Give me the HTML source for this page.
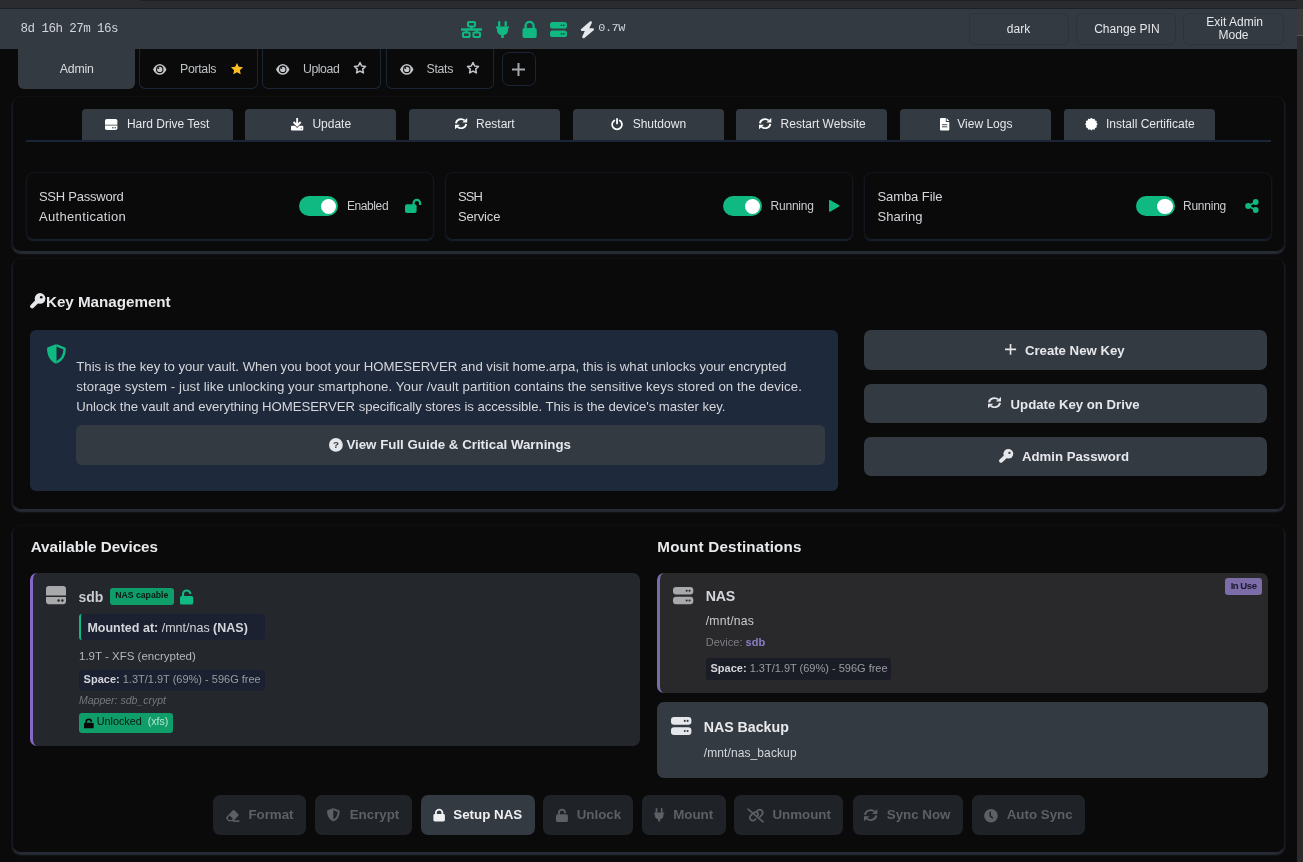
<!DOCTYPE html>
<html><head><meta charset="utf-8">
<style>
#wrap{position:absolute;left:0;top:0;width:1303px;height:862px;will-change:transform}
*{box-sizing:border-box;margin:0;padding:0}
html,body{width:1303px;height:862px;overflow:hidden;background:#0a0a0a;font-family:"Liberation Sans",sans-serif;color:#e5e7eb;position:relative}
.a{position:absolute;white-space:nowrap}
svg.a{overflow:visible}
</style></head><body><div id="wrap">
<div class="a" style="left:0px;top:0px;width:1297px;height:9px;background:#2a2c30;border-radius:0px;"></div>
<div class="a" style="left:140px;top:0px;width:1157px;height:1px;background:#1f2023;border-radius:0px;"></div>
<div class="a" style="left:0px;top:8px;width:1297px;height:1px;background:#1f2023;border-radius:0px;"></div>
<div class="a" style="left:1297px;top:0px;width:6px;height:862px;background:#2b2b2b;border-radius:0px;"></div>
<div class="a" style="left:1297px;top:9px;width:6px;height:26px;background:#3a3a3a;border-radius:0px;"></div>
<div class="a" style="left:1297px;top:35px;width:6px;height:1px;background:#555;border-radius:0px;"></div>
<div class="a" style="left:0px;top:9px;width:1297px;height:40px;background:#343a42;border-radius:0px;"></div>
<div class="a" style="left:20.60px;top:22.82px;font-size:12.5px;line-height:12.5px;color:#d1d5db;font-weight:normal;font-style:normal;font-family:'Liberation Mono',monospace;letter-spacing:-0.544px;">8d 16h 27m 16s</div>
<svg class="a" style="left:461px;top:21px;" width="21" height="17" viewBox="0 0 21 17" preserveAspectRatio="none"><g fill="none" stroke="#10b981" stroke-width="2"><rect x="7" y="1" width="7" height="4.4" rx="0.8"/><rect x="2" y="11.6" width="6.6" height="4.4" rx="0.8"/><rect x="12.4" y="11.6" width="6.6" height="4.4" rx="0.8"/></g><rect x="0" y="7.3" width="21" height="2.4" fill="#10b981"/><rect x="9.5" y="5" width="2" height="3" fill="#10b981"/><rect x="4.3" y="9" width="2" height="2.6" fill="#10b981"/><rect x="14.7" y="9" width="2" height="2.6" fill="#10b981"/></svg>
<svg class="a" style="left:496px;top:21px;" width="13" height="17" viewBox="0 0 13 17" preserveAspectRatio="none"><rect x="2.1" y="0" width="2.2" height="6" rx="1" fill="#10b981"/><rect x="8.6" y="0" width="2.2" height="6" rx="1" fill="#10b981"/><path fill="#10b981" d="M0 5.6h13v1.6h-1V9a5.5 5.5 0 0 1-4.2 5.2V17H5.2v-2.8A5.5 5.5 0 0 1 1 9V7.2H0z"/></svg>
<svg class="a" style="left:522px;top:21px;" width="15.2" height="17" viewBox="0 0 16 18" preserveAspectRatio="none"><path fill="none" stroke="#10b981" stroke-width="2.4" d="M3.8 8V5.2a4.2 4.2 0 0 1 8.4 0V8"/><rect x="0.5" y="7.3" width="15" height="10.7" rx="2" fill="#10b981"/></svg>
<svg class="a" style="left:550px;top:22px;" width="17" height="15.3" viewBox="0 0 20 18" preserveAspectRatio="none"><rect x="0" y="0" width="20" height="7.6" rx="3" fill="#10b981"/><rect x="0" y="10" width="20" height="7.6" rx="3" fill="#10b981"/><circle cx="13.5" cy="3.8" r="1" fill="#343a42"/><circle cx="16.3" cy="3.8" r="1" fill="#343a42"/><circle cx="13.5" cy="13.8" r="1" fill="#343a42"/><circle cx="16.3" cy="13.8" r="1" fill="#343a42"/></svg>
<svg class="a" style="left:581px;top:21px;" width="13" height="17.3" viewBox="0 0 13 17.3" preserveAspectRatio="none"><path fill="#e5e7eb" d="M10.2 0.3c.6.3.9 1 .6 1.6L8.3 7.2h3.5c.6 0 1.1.3 1.2.9.1.4 0 .8-.3 1.1L3.4 16.9c-.5.5-1.2.5-1.7.1-.5-.3-.6-1-.4-1.5l2.5-5.4H.9c-.5 0-1-.3-1.1-.8-.1-.5 0-.9.4-1.2L8.9.6c.4-.4.9-.5 1.3-.3z"/></svg>
<div class="a" style="left:598.20px;top:23.26px;font-size:11.8px;line-height:11.8px;color:#d1d5db;font-weight:normal;font-style:normal;font-family:'Liberation Mono',monospace;letter-spacing:-0.381px;">0.7W</div>
<div class="a" style="left:969px;top:12.5px;width:100px;height:32.5px;background:#343a42;border-radius:6px;border:1px solid #2f343c"></div>
<div class="a" style="left:1075.5px;top:12.5px;width:100px;height:32.5px;background:#343a42;border-radius:6px;border:1px solid #2f343c"></div>
<div class="a" style="left:1183px;top:12.5px;width:101px;height:32.5px;background:#343a42;border-radius:6px;border:1px solid #2f343c"></div>
<div class="a" style="left:1006.80px;top:22.84px;font-size:12px;line-height:12px;color:#e5e7eb;font-weight:normal;font-style:normal;font-family:'Liberation Sans',sans-serif;">dark</div>
<div class="a" style="left:1094.20px;top:22.84px;font-size:12px;line-height:12px;color:#e5e7eb;font-weight:normal;font-style:normal;font-family:'Liberation Sans',sans-serif;">Change PIN</div>
<div class="a" style="left:1206.30px;top:16.04px;font-size:12px;line-height:12px;color:#e5e7eb;font-weight:normal;font-style:normal;font-family:'Liberation Sans',sans-serif;">Exit Admin</div>
<div class="a" style="left:1218.50px;top:28.84px;font-size:12px;line-height:12px;color:#e5e7eb;font-weight:normal;font-style:normal;font-family:'Liberation Sans',sans-serif;">Mode</div>
<div class="a" style="left:18px;top:49px;width:117px;height:40px;background:#343a42;border-radius:0px;border-radius:0 0 6px 6px"></div>
<div class="a" style="left:59.80px;top:62.89px;font-size:12.3px;line-height:12.3px;color:#d9dbde;font-weight:normal;font-style:normal;font-family:'Liberation Sans',sans-serif;letter-spacing:-0.213px;">Admin</div>
<div class="a" style="left:138.5px;top:49px;width:119.5px;height:40px;border:1px solid #1b2536;border-top:none;border-radius:0 0 6px 6px"></div>
<div class="a" style="left:261.5px;top:49px;width:119.5px;height:40px;border:1px solid #1b2536;border-top:none;border-radius:0 0 6px 6px"></div>
<div class="a" style="left:385.5px;top:49px;width:108.5px;height:40px;border:1px solid #1b2536;border-top:none;border-radius:0 0 6px 6px"></div>
<svg class="a" style="left:153px;top:63.5px;" width="13.5" height="10.8" viewBox="0 0 14 11" preserveAspectRatio="none"><path fill="#c4c6ca" d="M0 5.5C1.6 2.2 4.2 0 7 0s5.4 2.2 7 5.5C12.4 8.8 9.8 11 7 11S1.6 8.8 0 5.5z"/><circle cx="7" cy="5.5" r="3.3" fill="none" stroke="#0a0a0a" stroke-width="1.1"/><circle cx="5.6" cy="4.2" r="1" fill="#0a0a0a"/></svg>
<div class="a" style="left:180.00px;top:63.09px;font-size:12.3px;line-height:12.3px;color:#bec1c5;font-weight:normal;font-style:normal;font-family:'Liberation Sans',sans-serif;letter-spacing:-0.298px;">Portals</div>
<svg class="a" style="left:229.89999999999998px;top:61.6px;" width="14" height="14" viewBox="0 0 24 24" preserveAspectRatio="none"><path fill="#fbbf24" d="M12 1.5l3.1 6.6 7.2.9-5.3 5 1.4 7.1L12 17.6l-6.4 3.5 1.4-7.1-5.3-5 7.2-.9z"/></svg>
<svg class="a" style="left:276.3px;top:63.5px;" width="13.5" height="10.8" viewBox="0 0 14 11" preserveAspectRatio="none"><path fill="#c4c6ca" d="M0 5.5C1.6 2.2 4.2 0 7 0s5.4 2.2 7 5.5C12.4 8.8 9.8 11 7 11S1.6 8.8 0 5.5z"/><circle cx="7" cy="5.5" r="3.3" fill="none" stroke="#0a0a0a" stroke-width="1.1"/><circle cx="5.6" cy="4.2" r="1" fill="#0a0a0a"/></svg>
<div class="a" style="left:303.00px;top:63.09px;font-size:12.3px;line-height:12.3px;color:#bec1c5;font-weight:normal;font-style:normal;font-family:'Liberation Sans',sans-serif;letter-spacing:-0.447px;">Upload</div>
<svg class="a" style="left:353.2px;top:61px;" width="14" height="14" viewBox="0 0 24 24" preserveAspectRatio="none"><path fill="none" stroke="#c4c6ca" stroke-width="2.6" stroke-linejoin="round" d="M12 2.5l2.9 6 6.5.9-4.8 4.6 1.2 6.5L12 17.3l-5.8 3.2 1.2-6.5-4.8-4.6 6.5-.9z"/></svg>
<svg class="a" style="left:400px;top:63.5px;" width="13.5" height="10.8" viewBox="0 0 14 11" preserveAspectRatio="none"><path fill="#c4c6ca" d="M0 5.5C1.6 2.2 4.2 0 7 0s5.4 2.2 7 5.5C12.4 8.8 9.8 11 7 11S1.6 8.8 0 5.5z"/><circle cx="7" cy="5.5" r="3.3" fill="none" stroke="#0a0a0a" stroke-width="1.1"/><circle cx="5.6" cy="4.2" r="1" fill="#0a0a0a"/></svg>
<div class="a" style="left:426.50px;top:63.09px;font-size:12.3px;line-height:12.3px;color:#bec1c5;font-weight:normal;font-style:normal;font-family:'Liberation Sans',sans-serif;letter-spacing:-0.306px;">Stats</div>
<svg class="a" style="left:465.7px;top:61px;" width="14" height="14" viewBox="0 0 24 24" preserveAspectRatio="none"><path fill="none" stroke="#c4c6ca" stroke-width="2.6" stroke-linejoin="round" d="M12 2.5l2.9 6 6.5.9-4.8 4.6 1.2 6.5L12 17.3l-5.8 3.2 1.2-6.5-4.8-4.6 6.5-.9z"/></svg>
<div class="a" style="left:502px;top:52px;width:34px;height:34px;border:1px solid #1b2536;border-radius:7px"></div>
<svg class="a" style="left:512.2px;top:63.3px;" width="13" height="13" viewBox="0 0 13 13" preserveAspectRatio="none"><path stroke="#a3a6ab" stroke-width="2" d="M6.5 0v13M0 6.5h13"/></svg>
<div class="a" style="left:12px;top:96px;width:1273px;height:156px;border:1px solid #161b23;border-top-color:#0d0f13;border-bottom-color:#252b35;border-radius:9px;box-shadow:0 1.5px 2px 0 #2a303a"></div>
<div class="a" style="left:26px;top:140px;width:1245px;height:1.5px;background:#1c2535;border-radius:0px;"></div>
<div class="a" style="left:82px;top:109.4px;width:151.3px;height:30.6px;background:#343a42;border-radius:0px;border-radius:4px 4px 0 0"></div>
<div class="a" style="left:245.2px;top:109.4px;width:151.3px;height:30.6px;background:#343a42;border-radius:0px;border-radius:4px 4px 0 0"></div>
<div class="a" style="left:408.8px;top:109.4px;width:151.3px;height:30.6px;background:#343a42;border-radius:0px;border-radius:4px 4px 0 0"></div>
<div class="a" style="left:572.5px;top:109.4px;width:151.3px;height:30.6px;background:#343a42;border-radius:0px;border-radius:4px 4px 0 0"></div>
<div class="a" style="left:736.2px;top:109.4px;width:151.3px;height:30.6px;background:#343a42;border-radius:0px;border-radius:4px 4px 0 0"></div>
<div class="a" style="left:899.9px;top:109.4px;width:151.3px;height:30.6px;background:#343a42;border-radius:0px;border-radius:4px 4px 0 0"></div>
<div class="a" style="left:1063.6px;top:109.4px;width:151.3px;height:30.6px;background:#343a42;border-radius:0px;border-radius:4px 4px 0 0"></div>
<svg class="a" style="left:104.9px;top:118.7px;" width="12.4" height="11" viewBox="0 0 20 18" preserveAspectRatio="none"><path fill="#ffffff" d="M0 3a3 3 0 0 1 3-3h14a3 3 0 0 1 3 3v6.3H0z"/><path fill="#ffffff" d="M0 10.8h20v4.4a2.8 2.8 0 0 1-2.8 2.8H2.8A2.8 2.8 0 0 1 0 15.2z"/><circle cx="12.6" cy="14.4" r="1.2" fill="#343a42"/><circle cx="16.4" cy="14.4" r="1.2" fill="#343a42"/></svg>
<div class="a" style="left:126.90px;top:117.94px;font-size:12px;line-height:12px;color:#e5e7eb;font-weight:normal;font-style:normal;font-family:'Liberation Sans',sans-serif;">Hard Drive Test</div>
<svg class="a" style="left:290.9px;top:118px;" width="12.3" height="12.4" viewBox="0 0 13 13" preserveAspectRatio="none"><path fill="#ffffff" d="M5.5 0h2v5.6l2.1-2.1 1.4 1.4-4.5 4.5-4.5-4.5 1.4-1.4 2.1 2.1z"/><path fill="#ffffff" d="M0 9.2a1 1 0 0 1 1-1h3.2l2.3 2.2 2.3-2.2H12a1 1 0 0 1 1 1V12a1 1 0 0 1-1 1H1a1 1 0 0 1-1-1z"/><circle cx="10.8" cy="10.8" r="0.6" fill="#343a42"/></svg>
<div class="a" style="left:312.40px;top:117.94px;font-size:12px;line-height:12px;color:#e5e7eb;font-weight:normal;font-style:normal;font-family:'Liberation Sans',sans-serif;">Update</div>
<svg class="a" style="left:455px;top:118.4px;" width="12.2" height="11.3" viewBox="0 0 16 16" preserveAspectRatio="none"><g fill="none" stroke="#ffffff" stroke-width="2.4"><path d="M1.3 7.6A6.7 6.7 0 0 1 12.6 3.4"/><path d="M14.7 8.4A6.7 6.7 0 0 1 3.4 12.6"/></g><path fill="#ffffff" d="M16 0v6.4H9.6z"/><path fill="#ffffff" d="M0 16V9.6h6.4z"/></svg>
<div class="a" style="left:476.00px;top:117.94px;font-size:12px;line-height:12px;color:#e5e7eb;font-weight:normal;font-style:normal;font-family:'Liberation Sans',sans-serif;">Restart</div>
<svg class="a" style="left:611.2px;top:118.2px;" width="12.1" height="11.8" viewBox="0 0 12 12" preserveAspectRatio="none"><path fill="none" stroke="#ffffff" stroke-width="1.7" stroke-linecap="round" d="M3.3 2.5A4.9 4.9 0 1 0 8.7 2.5"/><path stroke="#ffffff" stroke-width="1.8" stroke-linecap="round" d="M6 0.9v4.6"/></svg>
<div class="a" style="left:632.70px;top:117.94px;font-size:12px;line-height:12px;color:#e5e7eb;font-weight:normal;font-style:normal;font-family:'Liberation Sans',sans-serif;">Shutdown</div>
<svg class="a" style="left:759px;top:118.4px;" width="12.3" height="11.3" viewBox="0 0 16 16" preserveAspectRatio="none"><g fill="none" stroke="#ffffff" stroke-width="2.4"><path d="M1.3 7.6A6.7 6.7 0 0 1 12.6 3.4"/><path d="M14.7 8.4A6.7 6.7 0 0 1 3.4 12.6"/></g><path fill="#ffffff" d="M16 0v6.4H9.6z"/><path fill="#ffffff" d="M0 16V9.6h6.4z"/></svg>
<div class="a" style="left:780.60px;top:117.94px;font-size:12px;line-height:12px;color:#e5e7eb;font-weight:normal;font-style:normal;font-family:'Liberation Sans',sans-serif;">Restart Website</div>
<svg class="a" style="left:940px;top:117.9px;" width="9.3" height="12.4" viewBox="0 0 9.3 12.4" preserveAspectRatio="none"><path fill="#ffffff" d="M1 0h4.8v3.2a.9.9 0 0 0 .9.9h2.6V11.4a1 1 0 0 1-1 1H1a1 1 0 0 1-1-1V1a1 1 0 0 1 1-1z"/><path fill="#ffffff" d="M6.6 0l2.7 2.9H6.6z"/><rect x="2" y="6.3" width="5.3" height="0.9" fill="#343a42"/><rect x="2" y="8.4" width="5.3" height="0.9" fill="#343a42"/></svg>
<div class="a" style="left:957.30px;top:117.94px;font-size:12px;line-height:12px;color:#e5e7eb;font-weight:normal;font-style:normal;font-family:'Liberation Sans',sans-serif;">View Logs</div>
<svg class="a" style="left:1085px;top:118px;" width="12.7" height="12.3" viewBox="0 0 12.7 12.3" preserveAspectRatio="none"><polygon fill="#ffffff" points="12.70,6.15 11.47,7.52 11.85,9.32 10.10,9.90 9.53,11.65 7.72,11.27 6.35,12.50 4.98,11.27 3.18,11.65 2.60,9.90 0.85,9.32 1.23,7.52 0.00,6.15 1.23,4.78 0.85,2.98 2.60,2.40 3.17,0.65 4.98,1.03 6.35,-0.20 7.72,1.03 9.53,0.65 10.10,2.40 11.85,2.97 11.47,4.78"/></svg>
<div class="a" style="left:1106.00px;top:117.94px;font-size:12px;line-height:12px;color:#e5e7eb;font-weight:normal;font-style:normal;font-family:'Liberation Sans',sans-serif;">Install Certificate</div>
<div class="a" style="left:25.5px;top:172px;width:408px;height:67.5px;border:1px solid #12161d;border-bottom-color:#18202c;border-radius:8px;box-shadow:0 1.5px 1.5px -0.5px #1a2332"></div>
<div class="a" style="left:444.5px;top:172px;width:408px;height:67.5px;border:1px solid #12161d;border-bottom-color:#18202c;border-radius:8px;box-shadow:0 1.5px 1.5px -0.5px #1a2332"></div>
<div class="a" style="left:863.5px;top:172px;width:408px;height:67.5px;border:1px solid #12161d;border-bottom-color:#18202c;border-radius:8px;box-shadow:0 1.5px 1.5px -0.5px #1a2332"></div>
<div class="a" style="left:38.90px;top:190.20px;font-size:13px;line-height:13px;color:#d4d6da;font-weight:normal;font-style:normal;font-family:'Liberation Sans',sans-serif;letter-spacing:-0.235px;">SSH Password</div>
<div class="a" style="left:38.90px;top:209.90px;font-size:13px;line-height:13px;color:#d4d6da;font-weight:normal;font-style:normal;font-family:'Liberation Sans',sans-serif;letter-spacing:0.350px;">Authentication</div>
<div class="a" style="left:299.2px;top:196.2px;width:39px;height:20px;background:#10b981;border-radius:10px;"></div>
<div class="a" style="left:320.7px;top:198.5px;width:15.5px;height:15.5px;background:#ffffff;border-radius:8px;"></div>
<div class="a" style="left:346.90px;top:200.44px;font-size:12px;line-height:12px;color:#c9cbcf;font-weight:normal;font-style:normal;font-family:'Liberation Sans',sans-serif;letter-spacing:-0.392px;">Enabled</div>
<svg class="a" style="left:405px;top:199px;" width="15.5" height="14" viewBox="0 0 16 14" preserveAspectRatio="none"><path fill="none" stroke="#10b981" stroke-width="2.2" d="M8.8 6V4.2a3.4 3.4 0 0 1 6.8 0V6"/><rect x="0" y="5.3" width="12" height="8.7" rx="2" fill="#10b981"/></svg>
<div class="a" style="left:458.00px;top:190.20px;font-size:13px;line-height:13px;color:#d4d6da;font-weight:normal;font-style:normal;font-family:'Liberation Sans',sans-serif;letter-spacing:-0.877px;">SSH</div>
<div class="a" style="left:458.00px;top:209.90px;font-size:13px;line-height:13px;color:#d4d6da;font-weight:normal;font-style:normal;font-family:'Liberation Sans',sans-serif;letter-spacing:-0.164px;">Service</div>
<div class="a" style="left:723px;top:196.2px;width:39px;height:20px;background:#10b981;border-radius:10px;"></div>
<div class="a" style="left:744.5px;top:198.5px;width:15.5px;height:15.5px;background:#ffffff;border-radius:8px;"></div>
<div class="a" style="left:770.60px;top:200.44px;font-size:12px;line-height:12px;color:#c9cbcf;font-weight:normal;font-style:normal;font-family:'Liberation Sans',sans-serif;letter-spacing:-0.243px;">Running</div>
<svg class="a" style="left:829px;top:200px;" width="10.7" height="11.8" viewBox="0 0 10.7 11.8" preserveAspectRatio="none"><path fill="#10b981" d="M0 .8C0 .2.6-.2 1.1.1l9.1 5.2c.5.3.5 1 0 1.3L1.1 11.7C.6 12 0 11.6 0 11z"/></svg>
<div class="a" style="left:877.50px;top:190.20px;font-size:13px;line-height:13px;color:#d4d6da;font-weight:normal;font-style:normal;font-family:'Liberation Sans',sans-serif;letter-spacing:-0.085px;">Samba File</div>
<div class="a" style="left:877.50px;top:209.90px;font-size:13px;line-height:13px;color:#d4d6da;font-weight:normal;font-style:normal;font-family:'Liberation Sans',sans-serif;letter-spacing:0.027px;">Sharing</div>
<div class="a" style="left:1135.5px;top:196.2px;width:39px;height:20px;background:#10b981;border-radius:10px;"></div>
<div class="a" style="left:1157.0px;top:198.5px;width:15.5px;height:15.5px;background:#ffffff;border-radius:8px;"></div>
<div class="a" style="left:1183.00px;top:200.44px;font-size:12px;line-height:12px;color:#c9cbcf;font-weight:normal;font-style:normal;font-family:'Liberation Sans',sans-serif;letter-spacing:-0.243px;">Running</div>
<svg class="a" style="left:1245px;top:199.4px;" width="14" height="14" viewBox="0 0 14 14" preserveAspectRatio="none"><path stroke="#10b981" stroke-width="1.6" d="M3.2 7L10.7 3M3.2 7l7.5 4"/><circle cx="3.2" cy="7" r="3" fill="#10b981"/><circle cx="10.7" cy="3" r="2.9" fill="#10b981"/><circle cx="10.7" cy="11" r="2.9" fill="#10b981"/></svg>
<div class="a" style="left:12px;top:258px;width:1273px;height:252px;border:1px solid #161b23;border-top-color:#0d0f13;border-bottom-color:#252b35;border-radius:9px;box-shadow:0 1.5px 2px 0 #2a303a"></div>
<svg class="a" style="left:30px;top:293.4px;" width="15.5" height="15.5" viewBox="0 0 16 16" preserveAspectRatio="none"><circle cx="10.4" cy="5.6" r="5.5" fill="#e5e7eb"/><circle cx="11.6" cy="4.5" r="1.3" fill="#0a0a0a"/><path d="M7.2 8.8L2.2 13.8" stroke="#e5e7eb" stroke-width="4.3" stroke-linecap="round"/></svg>
<div class="a" style="left:46.00px;top:294.03px;font-size:15.2px;line-height:15.2px;color:#e8e9eb;font-weight:bold;font-style:normal;font-family:'Liberation Sans',sans-serif;letter-spacing:-0.023px;">Key Management</div>
<div class="a" style="left:30px;top:330px;width:808px;height:161px;background:#1e293b;border-radius:6px;"></div>
<svg class="a" style="left:46.5px;top:344.1px;" width="19" height="20" viewBox="0 0 19 20" preserveAspectRatio="none"><path fill="#10b981" d="M9.5 0L1 3.3C.4 3.5 0 4.1 0 4.8 .2 11.4 3.1 17 8.6 19.6c.3.2.6.2.9.2V0z"/><path fill="none" stroke="#10b981" stroke-width="2.5" d="M9.5 1.4L17 4.4c.5.2.7.6.7 1C17.4 11.3 14.8 16.1 9.5 18.4"/></svg>
<div class="a" style="left:76.30px;top:360.13px;font-size:13.2px;line-height:13.2px;color:#d4d6da;font-weight:normal;font-style:normal;font-family:'Liberation Sans',sans-serif;letter-spacing:-0.025px;">This is the key to your vault. When you boot your HOMESERVER and visit home.arpa, this is what unlocks your encrypted</div>
<div class="a" style="left:76.30px;top:380.13px;font-size:13.2px;line-height:13.2px;color:#d4d6da;font-weight:normal;font-style:normal;font-family:'Liberation Sans',sans-serif;letter-spacing:0.099px;">storage system - just like unlocking your smartphone. Your /vault partition contains the sensitive keys stored on the device.</div>
<div class="a" style="left:76.30px;top:400.13px;font-size:13.2px;line-height:13.2px;color:#d4d6da;font-weight:normal;font-style:normal;font-family:'Liberation Sans',sans-serif;letter-spacing:-0.059px;">Unlock the vault and everything HOMESERVER specifically stores is accessible. This is the device's master key.</div>
<div class="a" style="left:76px;top:425.2px;width:749.3px;height:40px;background:#343a42;border-radius:6px;"></div>
<svg class="a" style="left:328.9px;top:438px;" width="13.8" height="13.8" viewBox="0 0 14 14" preserveAspectRatio="none"><circle cx="7" cy="7" r="7" fill="#e5e7eb"/><text x="7" y="10.6" text-anchor="middle" font-family="Liberation Sans" font-weight="bold" font-size="10" fill="#343a42">?</text></svg>
<div class="a" style="left:346.40px;top:438.04px;font-size:13.3px;line-height:13.3px;color:#e5e7eb;font-weight:bold;font-style:normal;font-family:'Liberation Sans',sans-serif;">View Full Guide &amp; Critical Warnings</div>
<div class="a" style="left:863.5px;top:330.4px;width:403.7px;height:39.7px;background:#343a42;border-radius:7px;"></div>
<div class="a" style="left:863.5px;top:383.6px;width:403.7px;height:39.7px;background:#343a42;border-radius:7px;"></div>
<div class="a" style="left:863.5px;top:436.5px;width:403.7px;height:39.7px;background:#343a42;border-radius:7px;"></div>
<svg class="a" style="left:1004.5px;top:344.4px;" width="11.1" height="10.8" viewBox="0 0 11 11" preserveAspectRatio="none"><path stroke="#e5e7eb" stroke-width="1.6" d="M5.5 0v11M0 5.5h11"/></svg>
<div class="a" style="left:1024.90px;top:344.23px;font-size:13.2px;line-height:13.2px;color:#e5e7eb;font-weight:bold;font-style:normal;font-family:'Liberation Sans',sans-serif;">Create New Key</div>
<svg class="a" style="left:988.2px;top:397.4px;" width="13" height="11.3" viewBox="0 0 16 16" preserveAspectRatio="none"><g fill="none" stroke="#e5e7eb" stroke-width="2.4"><path d="M1.3 7.6A6.7 6.7 0 0 1 12.6 3.4"/><path d="M14.7 8.4A6.7 6.7 0 0 1 3.4 12.6"/></g><path fill="#e5e7eb" d="M16 0v6.4H9.6z"/><path fill="#e5e7eb" d="M0 16V9.6h6.4z"/></svg>
<div class="a" style="left:1010.60px;top:397.53px;font-size:13.2px;line-height:13.2px;color:#e5e7eb;font-weight:bold;font-style:normal;font-family:'Liberation Sans',sans-serif;">Update Key on Drive</div>
<svg class="a" style="left:998.8px;top:449.4px;" width="14.4" height="13.8" viewBox="0 0 16 16" preserveAspectRatio="none"><circle cx="10.4" cy="5.6" r="5.5" fill="#e5e7eb"/><circle cx="11.6" cy="4.5" r="1.3" fill="#343a42"/><path d="M7.2 8.8L2.2 13.8" stroke="#e5e7eb" stroke-width="4.3" stroke-linecap="round"/></svg>
<div class="a" style="left:1022.00px;top:450.33px;font-size:13.2px;line-height:13.2px;color:#e5e7eb;font-weight:bold;font-style:normal;font-family:'Liberation Sans',sans-serif;">Admin Password</div>
<div class="a" style="left:12px;top:524.6px;width:1273px;height:328px;border:1px solid #161b23;border-top-color:#0d0f13;border-bottom-color:#252b35;border-radius:9px;box-shadow:0 1.5px 2px 0 #2a303a"></div>
<div class="a" style="left:30.70px;top:539.23px;font-size:15.2px;line-height:15.2px;color:#e8e9eb;font-weight:bold;font-style:normal;font-family:'Liberation Sans',sans-serif;letter-spacing:-0.034px;">Available Devices</div>
<div class="a" style="left:657.30px;top:539.23px;font-size:15.2px;line-height:15.2px;color:#e8e9eb;font-weight:bold;font-style:normal;font-family:'Liberation Sans',sans-serif;letter-spacing:0.193px;">Mount Destinations</div>
<div class="a" style="left:30px;top:572.5px;width:610px;height:173.5px;background:#24272c;border-radius:7px;border-left:3px solid #8668c9"></div>
<svg class="a" style="left:46px;top:586.2px;" width="20" height="18.2" viewBox="0 0 20 18" preserveAspectRatio="none"><path fill="#a8a9ab" d="M0 3a3 3 0 0 1 3-3h14a3 3 0 0 1 3 3v6.3H0z"/><path fill="#a8a9ab" d="M0 10.8h20v4.4a2.8 2.8 0 0 1-2.8 2.8H2.8A2.8 2.8 0 0 1 0 15.2z"/><circle cx="12.6" cy="14.4" r="1.2" fill="#24272c"/><circle cx="16.4" cy="14.4" r="1.2" fill="#24272c"/></svg>
<div class="a" style="left:78.40px;top:589.95px;font-size:14px;line-height:14px;color:#c9cbcf;font-weight:bold;font-style:normal;font-family:'Liberation Sans',sans-serif;">sdb</div>
<div class="a" style="left:110.2px;top:587.6px;width:63.6px;height:17.4px;background:#0f9d6a;border-radius:3px;"></div>
<div class="a" style="left:115.20px;top:591.24px;font-size:8.7px;line-height:8.7px;color:#0b1a14;font-weight:bold;font-style:normal;font-family:'Liberation Sans',sans-serif;">NAS capable</div>
<svg class="a" style="left:180px;top:589.8px;" width="13.2" height="14.6" viewBox="0 0 13 14.6" preserveAspectRatio="none"><path fill="none" stroke="#10b981" stroke-width="2.1" d="M3 6.6V4.1a3.6 3.6 0 0 1 7.2 0"/><rect x="0" y="6" width="13" height="8.6" rx="1.6" fill="#10b981"/></svg>
<div class="a" style="left:79px;top:614.3px;width:186px;height:25.8px;background:#1b2130;border-radius:3px;border-left:2px solid #10b981"></div>
<div class="a" style="left:87.40px;top:621.72px;font-size:12.5px;line-height:12.5px;color:#d4d6da;font-weight:normal;font-style:normal;font-family:'Liberation Sans',sans-serif;"><b>Mounted at:</b> /mnt/nas <b>(NAS)</b></div>
<div class="a" style="left:79.00px;top:651.47px;font-size:11.5px;line-height:11.5px;color:#b5b7bb;font-weight:normal;font-style:normal;font-family:'Liberation Sans',sans-serif;">1.9T - XFS (encrypted)</div>
<div class="a" style="left:79px;top:669.5px;width:186px;height:21.3px;background:#1b2130;border-radius:3px;"></div>
<div class="a" style="left:83.60px;top:674.09px;font-size:11px;line-height:11px;color:#9a9ca0;font-weight:normal;font-style:normal;font-family:'Liberation Sans',sans-serif;"><b style="color:#d4d6da">Space:</b> 1.3T/1.9T (69%) - 596G free</div>
<div class="a" style="left:79.00px;top:695.41px;font-size:10.5px;line-height:10.5px;color:#77797d;font-weight:normal;font-style:italic;font-family:'Liberation Sans',sans-serif;">Mapper: sdb_crypt</div>
<div class="a" style="left:79px;top:712.5px;width:93.8px;height:20px;background:#0f9d6a;border-radius:3px;"></div>
<svg class="a" style="left:83.8px;top:719px;" width="9.7" height="9.3" viewBox="0 0 10 10.6" preserveAspectRatio="none"><path fill="none" stroke="#0a0a0a" stroke-width="1.8" d="M2.3 4.6V3a2.6 2.6 0 0 1 5.2 0"/><rect x="0" y="4.3" width="10" height="6.3" rx="1" fill="#0a0a0a"/></svg>
<div class="a" style="left:96.70px;top:715.96px;font-size:10.8px;line-height:10.8px;color:#0b1a14;font-weight:normal;font-style:normal;font-family:'Liberation Sans',sans-serif;">Unlocked</div>
<div class="a" style="left:147.80px;top:716.21px;font-size:10.5px;line-height:10.5px;color:#b8e6d2;font-weight:normal;font-style:normal;font-family:'Liberation Sans',sans-serif;">(xfs)</div>
<div class="a" style="left:657px;top:572.6px;width:611px;height:120.4px;background:#29292c;border-radius:7px;border-left:3px solid #7a6ba6"></div>
<div class="a" style="left:1225.4px;top:577.5px;width:37px;height:17px;background:#7c6ca7;border-radius:3px;"></div>
<div class="a" style="left:1230.70px;top:581.47px;font-size:9.6px;line-height:9.6px;color:#1b1830;font-weight:bold;font-style:normal;font-family:'Liberation Sans',sans-serif;letter-spacing:-0.502px;">In Use</div>
<svg class="a" style="left:673px;top:586.5px;" width="20.3" height="17.7" viewBox="0 0 20 18" preserveAspectRatio="none"><rect x="0" y="0" width="20" height="7.6" rx="3" fill="#a8a9ab"/><rect x="0" y="10" width="20" height="7.6" rx="3" fill="#a8a9ab"/><circle cx="13.5" cy="3.8" r="1" fill="#29292c"/><circle cx="16.3" cy="3.8" r="1" fill="#29292c"/><circle cx="13.5" cy="13.8" r="1" fill="#29292c"/><circle cx="16.3" cy="13.8" r="1" fill="#29292c"/></svg>
<div class="a" style="left:705.80px;top:589.38px;font-size:14.2px;line-height:14.2px;color:#d4d6da;font-weight:bold;font-style:normal;font-family:'Liberation Sans',sans-serif;letter-spacing:-0.261px;">NAS</div>
<div class="a" style="left:705.80px;top:614.87px;font-size:12.2px;line-height:12.2px;color:#c9cbcf;font-weight:normal;font-style:normal;font-family:'Liberation Sans',sans-serif;letter-spacing:0.177px;">/mnt/nas</div>
<div class="a" style="left:705.80px;top:637.09px;font-size:11px;line-height:11px;color:#7d7f83;font-weight:normal;font-style:normal;font-family:'Liberation Sans',sans-serif;">Device: <b style="color:#8b7fc7">sdb</b></div>
<div class="a" style="left:705.7px;top:658.4px;width:185.4px;height:21.9px;background:#1b1d26;border-radius:3px;"></div>
<div class="a" style="left:710.50px;top:663.19px;font-size:11px;line-height:11px;color:#9a9ca0;font-weight:normal;font-style:normal;font-family:'Liberation Sans',sans-serif;"><b style="color:#d4d6da">Space:</b> 1.3T/1.9T (69%) - 596G free</div>
<div class="a" style="left:657px;top:702.4px;width:611px;height:75.5px;background:#343a42;border-radius:7px;"></div>
<svg class="a" style="left:671px;top:716.5px;" width="20.4" height="18.4" viewBox="0 0 20 18" preserveAspectRatio="none"><rect x="0" y="0" width="20" height="7.6" rx="3" fill="#e5e7eb"/><rect x="0" y="10" width="20" height="7.6" rx="3" fill="#e5e7eb"/><circle cx="13.5" cy="3.8" r="1" fill="#343a42"/><circle cx="16.3" cy="3.8" r="1" fill="#343a42"/><circle cx="13.5" cy="13.8" r="1" fill="#343a42"/><circle cx="16.3" cy="13.8" r="1" fill="#343a42"/></svg>
<div class="a" style="left:703.70px;top:719.78px;font-size:14.2px;line-height:14.2px;color:#e8e9eb;font-weight:bold;font-style:normal;font-family:'Liberation Sans',sans-serif;">NAS Backup</div>
<div class="a" style="left:703.70px;top:746.84px;font-size:12px;line-height:12px;color:#d4d6da;font-weight:normal;font-style:normal;font-family:'Liberation Sans',sans-serif;letter-spacing:0.107px;">/mnt/nas_backup</div>
<div class="a" style="left:212.5px;top:794.6px;width:93.5px;height:40.5px;background:#1f2227;border-radius:7px;"></div>
<div class="a" style="left:315.1px;top:794.6px;width:96.7px;height:40.5px;background:#1f2227;border-radius:7px;"></div>
<div class="a" style="left:420.5px;top:794.6px;width:114.5px;height:40.5px;background:#343a42;border-radius:7px;"></div>
<div class="a" style="left:543.3px;top:794.6px;width:89.5px;height:40.5px;background:#1f2227;border-radius:7px;"></div>
<div class="a" style="left:642.4px;top:794.6px;width:83.5px;height:40.5px;background:#1f2227;border-radius:7px;"></div>
<div class="a" style="left:734.3px;top:794.6px;width:108.7px;height:40.5px;background:#1f2227;border-radius:7px;"></div>
<div class="a" style="left:852.7px;top:794.6px;width:110.8px;height:40.5px;background:#1f2227;border-radius:7px;"></div>
<div class="a" style="left:971.5px;top:794.6px;width:113.5px;height:40.5px;background:#1f2227;border-radius:7px;"></div>
<div class="a" style="left:248.40px;top:808.12px;font-size:13.33px;line-height:13.33px;color:#5c6067;font-weight:bold;font-style:normal;font-family:'Liberation Sans',sans-serif;">Format</div>
<div class="a" style="left:349.70px;top:808.12px;font-size:13.33px;line-height:13.33px;color:#5c6067;font-weight:bold;font-style:normal;font-family:'Liberation Sans',sans-serif;">Encrypt</div>
<div class="a" style="left:576.70px;top:808.12px;font-size:13.33px;line-height:13.33px;color:#5c6067;font-weight:bold;font-style:normal;font-family:'Liberation Sans',sans-serif;">Unlock</div>
<div class="a" style="left:673.20px;top:808.12px;font-size:13.33px;line-height:13.33px;color:#5c6067;font-weight:bold;font-style:normal;font-family:'Liberation Sans',sans-serif;">Mount</div>
<div class="a" style="left:772.40px;top:808.12px;font-size:13.33px;line-height:13.33px;color:#5c6067;font-weight:bold;font-style:normal;font-family:'Liberation Sans',sans-serif;">Unmount</div>
<div class="a" style="left:886.80px;top:808.12px;font-size:13.33px;line-height:13.33px;color:#5c6067;font-weight:bold;font-style:normal;font-family:'Liberation Sans',sans-serif;">Sync Now</div>
<div class="a" style="left:1006.70px;top:808.12px;font-size:13.33px;line-height:13.33px;color:#5c6067;font-weight:bold;font-style:normal;font-family:'Liberation Sans',sans-serif;">Auto Sync</div>
<div class="a" style="left:453.30px;top:808.12px;font-size:13.33px;line-height:13.33px;color:#eef0f2;font-weight:bold;font-style:normal;font-family:'Liberation Sans',sans-serif;">Setup NAS</div>
<svg class="a" style="left:225.8px;top:809.5px;" width="13.4" height="12.3" viewBox="0 0 13.4 12.3" preserveAspectRatio="none"><path fill="#5c6067" d="M6.6.6a1.5 1.5 0 0 1 2.1 0l3.4 3.4a1.5 1.5 0 0 1 0 2.1L7 11.2H2.6L.5 9.1a1.5 1.5 0 0 1 0-2.1z"/><path fill="#1f2227" d="M3.5 5.4L6.9 8.8 5.7 10H3.2L1.9 8.7a.6.6 0 0 1 0-.8z"/><rect x="7" y="10.3" width="6.4" height="1.6" fill="#5c6067"/></svg>
<svg class="a" style="left:327.3px;top:808.4px;" width="12.7" height="13.6" viewBox="0 0 19 20" preserveAspectRatio="none"><path fill="#5c6067" d="M9.5 0L1 3.3C.4 3.5 0 4.1 0 4.8 .2 11.4 3.1 17 8.6 19.6c.3.2.6.2.9.2V0z"/><path fill="none" stroke="#5c6067" stroke-width="2.8" d="M9.5 1.5L17 4.5c.4.2.6.5.6.9C17.3 11.3 14.8 16.1 9.5 18.4"/></svg>
<svg class="a" style="left:432.9px;top:809.4px;" width="12.3" height="12.5" viewBox="0 0 16 18" preserveAspectRatio="none"><path fill="none" stroke="#eef0f2" stroke-width="2.4" d="M3.8 8V5.2a4.2 4.2 0 0 1 8.4 0V8"/><rect x="0.5" y="7.3" width="15" height="10.7" rx="2" fill="#eef0f2"/></svg>
<svg class="a" style="left:556.2px;top:808.7px;" width="11.9" height="13" viewBox="0 0 12 13" preserveAspectRatio="none"><path fill="none" stroke="#5c6067" stroke-width="1.9" d="M3 5.6V3.6a3 3 0 0 1 6 0v.6"/><rect x="0" y="5.2" width="12" height="7.8" rx="1.6" fill="#5c6067"/></svg>
<svg class="a" style="left:654px;top:808px;" width="10.3" height="13.5" viewBox="0 0 13 17" preserveAspectRatio="none"><rect x="2.1" y="0" width="2.2" height="6" rx="1" fill="#5c6067"/><rect x="8.6" y="0" width="2.2" height="6" rx="1" fill="#5c6067"/><path fill="#5c6067" d="M0 5.6h13v1.6h-1V9a5.5 5.5 0 0 1-4.2 5.2V17H5.2v-2.8A5.5 5.5 0 0 1 1 9V7.2H0z"/></svg>
<svg class="a" style="left:747px;top:807.5px;" width="17.1" height="15" viewBox="0 0 17 15" preserveAspectRatio="none"><g fill="none" stroke="#5c6067" stroke-width="1.7" stroke-linecap="round"><path d="M1 1.2l15 12.6"/><path d="M5.6 5.6L3.4 7.8a3 3 0 0 0 4.2 4.2l1-1"/><path d="M6.6 5.1l.5-.5a2.3 2.3 0 0 1 3.3 3.2"/><path d="M9.6 3.6l1.2-1.2a3 3 0 0 1 4.2 4.2l-2.2 2.2"/></g></svg>
<svg class="a" style="left:864.2px;top:809px;" width="13.4" height="12.2" viewBox="0 0 16 16" preserveAspectRatio="none"><g fill="none" stroke="#5c6067" stroke-width="2.4"><path d="M1.3 7.6A6.7 6.7 0 0 1 12.6 3.4"/><path d="M14.7 8.4A6.7 6.7 0 0 1 3.4 12.6"/></g><path fill="#5c6067" d="M16 0v6.4H9.6z"/><path fill="#5c6067" d="M0 16V9.6h6.4z"/></svg>
<svg class="a" style="left:984px;top:808.5px;" width="13.9" height="13.7" viewBox="0 0 14 14" preserveAspectRatio="none"><circle cx="7" cy="7" r="6.9" fill="#5c6067"/><path fill="none" stroke="#1f2227" stroke-width="1.5" stroke-linecap="round" d="M6.3 3.4v3.9l2.3 1.7"/></svg>
</div></body></html>
